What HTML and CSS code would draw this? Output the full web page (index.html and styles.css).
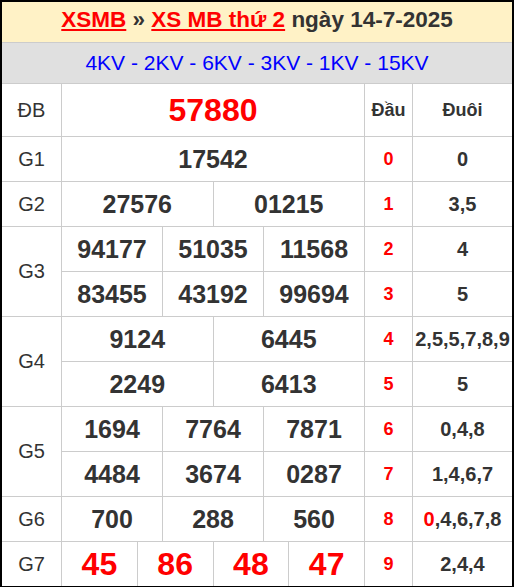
FILE: index.html
```html
<!DOCTYPE html>
<html lang="vi">
<head>
<meta charset="utf-8">
<title>XSMB 14-7-2025</title>
<link rel="stylesheet" href="styles.css">
</head>
<body>
<div class="board">
  <div class="title"><a href="#">XSMB</a> » <a href="#">XS MB thứ 2</a> ngày 14-7-2025</div>
  <div class="kv">4KV - 2KV - 6KV - 3KV - 1KV - 15KV</div>
  <div class="grid">
    <div class="lbl r1">ĐB</div>
    <div class="num r1 db">57880</div>
    <div class="head r1 c3">Đầu</div>
    <div class="head r1 c4">Đuôi</div>

    <div class="lbl r2">G1</div>
    <div class="num r2">17542</div>

    <div class="lbl r3">G2</div>
    <div class="sub r3 cols2"><div>27576</div><div>01215</div></div>

    <div class="lbl r4 span2">G3</div>
    <div class="sub r4 span2 cols3 rows2">
      <div>94177</div><div>51035</div><div>11568</div>
      <div>83455</div><div>43192</div><div>99694</div>
    </div>

    <div class="lbl r6 span2">G4</div>
    <div class="sub r6 span2 cols2 rows2">
      <div>9124</div><div>6445</div>
      <div>2249</div><div>6413</div>
    </div>

    <div class="lbl r8 span2">G5</div>
    <div class="sub r8 span2 cols3 rows2">
      <div>1694</div><div>7764</div><div>7871</div>
      <div>4484</div><div>3674</div><div>0287</div>
    </div>

    <div class="lbl r10">G6</div>
    <div class="sub r10 cols3"><div>700</div><div>288</div><div>560</div></div>

    <div class="lbl r11">G7</div>
    <div class="sub r11 cols4 g7"><div>45</div><div>86</div><div>48</div><div>47</div></div>

    <div class="dau r2">0</div><div class="duoi r2">0</div>
    <div class="dau r3">1</div><div class="duoi r3">3,5</div>
    <div class="dau r4">2</div><div class="duoi r4">4</div>
    <div class="dau r5">3</div><div class="duoi r5">5</div>
    <div class="dau r6">4</div><div class="duoi r6">2,5,5,7,8,9</div>
    <div class="dau r7">5</div><div class="duoi r7">5</div>
    <div class="dau r8">6</div><div class="duoi r8">0,4,8</div>
    <div class="dau r9">7</div><div class="duoi r9">1,4,6,7</div>
    <div class="dau r10">8</div><div class="duoi r10"><span class="red">0</span>,4,6,7,8</div>
    <div class="dau r11">9</div><div class="duoi r11">2,4,4</div>
  </div>
</div>
</body>
</html>
```

FILE: styles.css
```css
html, body {
  margin: 0;
  padding: 0;
  background: #fff;
}
body {
  font-family: "Liberation Sans", Arial, sans-serif;
  color: #333;
}
.board {
  width: 514px;
  box-sizing: border-box;
  border: 2px solid #000;
  background: #fff;
}
.title {
  height: 41px;
  box-sizing: border-box;
  background: #fff2c6;
  border-bottom: 1px solid #ccc;
  display: flex;
  align-items: center;
  justify-content: center;
  padding-bottom: 4px;
  font-size: 22.5px;
  font-weight: bold;
  color: #333;
  white-space: pre;
}
.title a {
  color: #f00;
  text-decoration: underline;
}
.kv {
  height: 41px;
  box-sizing: border-box;
  background: #e0e0e0;
  border-bottom: 1px solid #ccc;
  display: flex;
  align-items: center;
  justify-content: center;
  font-size: 21px;
  color: #00f;
}
.grid {
  display: grid;
  grid-template-columns: 59px 302px 47px 99px;
  grid-template-rows: 52px repeat(10, 44px);
  gap: 1px;
  background: #ccc;
}
.grid > div {
  background: #fff;
  display: flex;
  align-items: center;
  justify-content: center;
}
.r1 { grid-row: 1; }
.r2 { grid-row: 2; }
.r3 { grid-row: 3; }
.r4 { grid-row: 4; }
.r5 { grid-row: 5; }
.r6 { grid-row: 6; }
.r7 { grid-row: 7; }
.r8 { grid-row: 8; }
.r9 { grid-row: 9; }
.r10 { grid-row: 10; }
.r11 { grid-row: 11; }
.r4.span2 { grid-row: 4 / span 2; }
.r6.span2 { grid-row: 6 / span 2; }
.r8.span2 { grid-row: 8 / span 2; }

.lbl {
  grid-column: 1;
  font-size: 20px;
  color: #333;
}
.num, .sub { grid-column: 2; }
.c3, .dau { grid-column: 3; }
.c4, .duoi { grid-column: 4; }

.num {
  font-size: 25px;
  font-weight: bold;
}
.num.db {
  font-size: 32px;
  color: #f00;
}
.grid > .sub {
  display: grid;
  gap: 1px;
  background: #ccc;
  align-items: stretch;
  justify-content: stretch;
}
.sub > div {
  background: #fff;
  display: flex;
  align-items: center;
  justify-content: center;
  font-size: 25px;
  font-weight: bold;
}
.cols2 { grid-template-columns: repeat(2, 1fr); }
.cols3 { grid-template-columns: repeat(3, 1fr); }
.cols4 { grid-template-columns: repeat(4, 1fr); }
.rows2 { grid-template-rows: 44px 44px; }
.g7 > div {
  font-size: 32px;
  color: #f00;
}
.head {
  font-size: 18px;
  font-weight: bold;
}
.dau {
  font-size: 18px;
  font-weight: bold;
  color: #f00;
}
.duoi {
  font-size: 20px;
  font-weight: bold;
}
.red { color: #f00; }
```
